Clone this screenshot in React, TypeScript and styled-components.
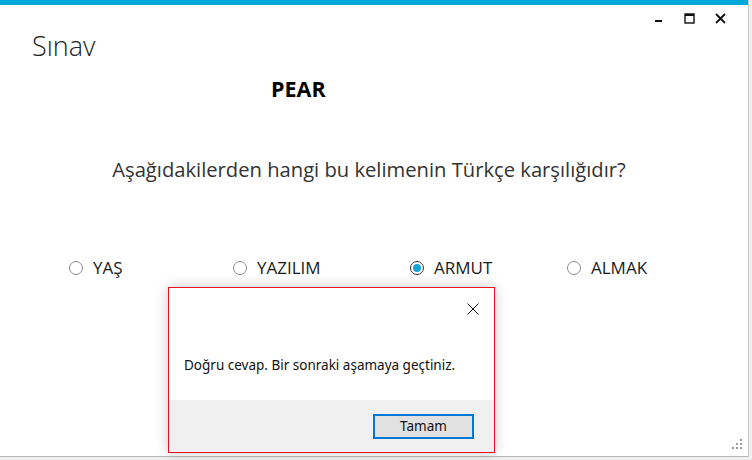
import React from "react";
import styled, { createGlobalStyle } from "styled-components";

const Global = createGlobalStyle`
  html, body { margin: 0; padding: 0; background: #f0f0f0; }
  body { font-family: "Open Sans", "Noto Sans", sans-serif; width: 752px; height: 460px; overflow: hidden; }
`;

const Window = styled.div`
  position: relative;
  width: 749px;
  height: 457px;
  background: #ffffff;
  border-right: 1px solid #c8c8c8;
  border-bottom: 1px solid #b8b8b8;
  box-sizing: border-box;
  display: flex;
  flex-direction: column;
`;

const AccentBar = styled.div`
  height: 5px;
  background: #00a9d9;
  flex: none;
`;

const TitleRow = styled.div`
  display: flex;
  justify-content: flex-end;
  align-items: center;
  height: 26px;
  padding-right: 12px;
`;

const CtrlButton = styled.div`
  width: 31px;
  height: 20px;
  display: flex;
  align-items: center;
  justify-content: center;
  color: #111;
`;

const Heading = styled.h1`
  margin: 0;
  padding-left: 32px;
  font-family: "Open Sans", sans-serif;
  font-weight: 300;
  font-size: 27px;
  line-height: 30px;
  color: #222;
`;

const Word = styled.div`
  margin-top: 14px;
  padding-left: 271px;
  font-family: "Open Sans", sans-serif;
  font-weight: 700;
  font-size: 21.5px;
  line-height: 28px;
  color: #000;
`;

const Question = styled.div`
  margin-top: 52px;
  text-align: center;
  font-size: 20.2px;
  line-height: 28px;
  color: #333;
  padding-right: 10px;
`;

const Options = styled.div`
  margin-top: 74px;
  display: grid;
  grid-template-columns: 164px 177px 157px auto;
  padding-left: 69px;
`;

const Option = styled.label`
  display: flex;
  align-items: center;
  gap: 10px;
  font-size: 17px;
  line-height: 22px;
  color: #1a1a1a;
`;

const Radio = styled.span<{ $checked?: boolean }>`
  width: 14px;
  height: 14px;
  border-radius: 50%;
  box-sizing: border-box;
  border: 1px solid ${(p) => (p.$checked ? "#333" : "#8a8a8a")};
  display: flex;
  align-items: center;
  justify-content: center;
  &::after {
    content: "";
    width: 8px;
    height: 8px;
    border-radius: 50%;
    background: ${(p) => (p.$checked ? "#16a6d8" : "transparent")};
  }
`;

const Grip = styled.div`
  position: absolute;
  right: 4px;
  bottom: 5px;
  width: 12px;
  height: 12px;
  display: grid;
  grid-template-columns: repeat(3, 4px);
  grid-template-rows: repeat(3, 4px);
`;

const Dot = styled.span<{ $on?: boolean }>`
  width: 2px;
  height: 2px;
  background: ${(p) => (p.$on ? "#9a9a9a" : "transparent")};
`;

const Dialog = styled.div`
  position: absolute;
  left: 168px;
  top: 287px;
  width: 327px;
  height: 166px;
  box-sizing: border-box;
  border: 1px solid #e81123;
  background: #fff;
  box-shadow: 0 0 12px rgba(0, 0, 0, 0.22);
  display: flex;
  flex-direction: column;
  font-family: "Noto Sans", "Open Sans", sans-serif;
`;

const DialogTop = styled.div`
  flex: 1;
  display: flex;
  flex-direction: column;
`;

const DialogClose = styled.div`
  align-self: flex-end;
  width: 30px;
  height: 24px;
  margin-top: 9px;
  margin-right: 6px;
  display: flex;
  align-items: center;
  justify-content: center;
`;

const Message = styled.div`
  margin-top: 35px;
  padding-left: 15px;
  font-size: 13.5px;
  line-height: 18px;
  color: #111;
`;

const DialogFooter = styled.div`
  height: 52px;
  background: #f0f0f0;
  display: flex;
  align-items: center;
  justify-content: flex-end;
  padding-right: 20px;
`;

const OkButton = styled.button`
  width: 101px;
  height: 25px;
  box-sizing: border-box;
  border: 2px solid #0078d7;
  background: #e1e1e1;
  font-family: "Noto Sans", "Open Sans", sans-serif;
  font-size: 13.5px;
  color: #111;
  padding: 0;
`;

const options = [
  { label: "YAŞ", checked: false },
  { label: "YAZILIM", checked: false },
  { label: "ARMUT", checked: true },
  { label: "ALMAK", checked: false },
];

const gripPattern = [false, false, true, false, true, true, true, true, true];

export default function App() {
  return (
    <>
      <Global />
      <Window>
        <AccentBar />
        <TitleRow>
          <CtrlButton>
            <svg width="10" height="10" viewBox="0 0 10 10">
              <rect x="1" y="7" width="7" height="2" fill="#111" />
            </svg>
          </CtrlButton>
          <CtrlButton>
            <svg width="11" height="11" viewBox="0 0 11 11">
              <rect x="1" y="1" width="9" height="9" fill="none" stroke="#111" strokeWidth="1.4" />
              <rect x="1" y="1" width="9" height="2" fill="#111" />
            </svg>
          </CtrlButton>
          <CtrlButton>
            <svg width="11" height="11" viewBox="0 0 11 11">
              <path d="M1 1 L10 10 M10 1 L1 10" stroke="#111" strokeWidth="1.8" />
            </svg>
          </CtrlButton>
        </TitleRow>
        <Heading>Sınav</Heading>
        <Word>PEAR</Word>
        <Question>Aşağıdakilerden hangi bu kelimenin Türkçe karşılığıdır?</Question>
        <Options>
          {options.map((o) => (
            <Option key={o.label}>
              <Radio $checked={o.checked} />
              {o.label}
            </Option>
          ))}
        </Options>
        <Grip>
          {gripPattern.map((on, i) => (
            <Dot key={i} $on={on} />
          ))}
        </Grip>
        <Dialog>
          <DialogTop>
            <DialogClose>
              <svg width="12" height="12" viewBox="0 0 12 12">
                <path d="M0.5 0.5 L11.5 11.5 M11.5 0.5 L0.5 11.5" stroke="#111" strokeWidth="1" />
              </svg>
            </DialogClose>
            <Message>Doğru cevap. Bir sonraki aşamaya geçtiniz.</Message>
          </DialogTop>
          <DialogFooter>
            <OkButton>Tamam</OkButton>
          </DialogFooter>
        </Dialog>
      </Window>
    </>
  );
}
